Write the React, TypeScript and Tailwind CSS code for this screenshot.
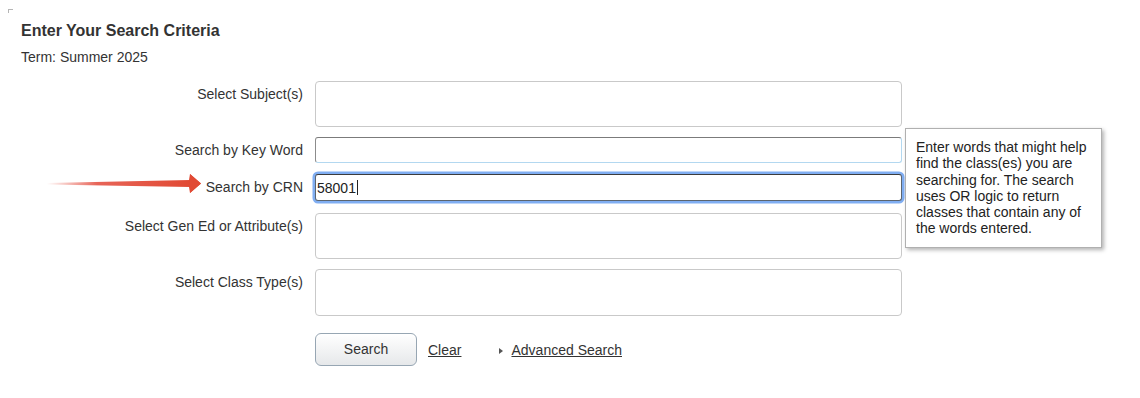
import React from 'react';

const fields = [
  { label: 'Select Subject(s)', kind: 'multi', mt: 'mt-[16px]', h: 'h-[46px]' },
  { label: 'Search by Key Word', kind: 'keyword', mt: 'mt-[10px]', h: 'h-[26px]' },
  { label: 'Search by CRN', kind: 'crn', mt: 'mt-[11px]', h: 'h-[27px]' },
  { label: 'Select Gen Ed or Attribute(s)', kind: 'multi', mt: 'mt-[12px]', h: 'h-[46px]' },
  { label: 'Select Class Type(s)', kind: 'multi', mt: 'mt-[10px]', h: 'h-[47px]' },
];

const boxClass = (kind: string) => {
  if (kind === 'keyword') {
    return 'border border-t-[#7b7b7b] border-l-[#8c8c8c] border-r-[#b3d8f0] border-b-[#b3d8f0] rounded-[3px]';
  }
  if (kind === 'crn') {
    return 'border border-[#5b6570] border-t-[#3c3c3c] rounded-[3px] ring-[2.5px] ring-[#80aef2]';
  }
  return 'border border-[#c9c9c9] rounded-[4px]';
};

const App: React.FC = () => {
  return (
    <div className="relative w-full h-[398px] bg-white text-[#333] font-['Liberation_Sans',Arial,sans-serif] overflow-hidden">
      {/* broken image corner */}
      <div className="absolute left-[8px] top-[9px] w-[5px] h-[4px] border-t border-l border-[#b5b5b5]" />

      <div className="pl-[21px] pt-[21px]">
        <h1 className="text-[16px] leading-[19px] font-bold text-[#333]">Enter Your Search Criteria</h1>
        <p className="mt-[9px] text-[14px] leading-[16px]">Term: Summer 2025</p>
      </div>

      <div className="flex flex-col">
        {fields.map((f) => (
          <div key={f.label} className={`flex items-start ${f.mt}`}>
            <div className="w-[303px] shrink-0 text-right text-[14px] leading-[16px] pt-[5px]">{f.label}</div>
            <div className={`ml-[12px] w-[587px] bg-white ${f.h} ${boxClass(f.kind)} flex items-center`}>
              {f.kind === 'crn' && (
                <span className="pl-[1px] text-[14px] leading-[16px] text-[#222] flex items-center">
                  58001
                  <span className="ml-[1px] w-px h-[15px] bg-[#222]" />
                </span>
              )}
            </div>
          </div>
        ))}

        <div className="flex items-center mt-[17px] pl-[315px]">
          <button className="w-[102px] h-[33px] rounded-[6px] border border-[#97a6b3] bg-gradient-to-b from-white to-[#e6e8ea] text-[14px] text-[#333] shadow-[inset_0_1px_0_#fff]">
            Search
          </button>
          <a className="ml-[11px] text-[14px] underline text-[#333] pt-[2px]">Clear</a>
          <span className="ml-[38px] mt-[2px] w-0 h-0 border-t-[3.5px] border-b-[3.5px] border-l-[4px] border-t-transparent border-b-transparent border-l-[#555]" />
          <a className="ml-[8px] text-[14px] underline text-[#333] pt-[2px]">Advanced Search</a>
        </div>
      </div>

      {/* tooltip */}
      <div className="absolute left-[905px] top-[128px] w-[197px] bg-white border border-[#b0b0b0] shadow-[2px_2px_4px_rgba(0,0,0,0.3)] px-[10px] py-[10px] text-[14px] leading-[16.3px] text-[#222]">
        Enter words that might help find the class(es) you are searching for. The search uses OR logic to return classes that contain any of the words entered.
      </div>

      {/* annotation arrow */}
      <svg className="absolute left-0 top-0" width="220" height="220" viewBox="0 0 220 220">
        <defs>
          <linearGradient id="arrowFade" x1="47" y1="0" x2="190" y2="0" gradientUnits="userSpaceOnUse">
            <stop offset="0" stopColor="#e3493a" stopOpacity="0" />
            <stop offset="0.35" stopColor="#e3493a" stopOpacity="0.85" />
            <stop offset="1" stopColor="#e14a34" />
          </linearGradient>
        </defs>
        <polygon points="47,183 190,180 190,174 201,183.5 190,193 190,187 47,184.5" fill="url(#arrowFade)" />
        <polygon points="189,180 190,174 201,183.5 190,193 189,187" fill="#e14a34" />
      </svg>
    </div>
  );
};

export default App;
